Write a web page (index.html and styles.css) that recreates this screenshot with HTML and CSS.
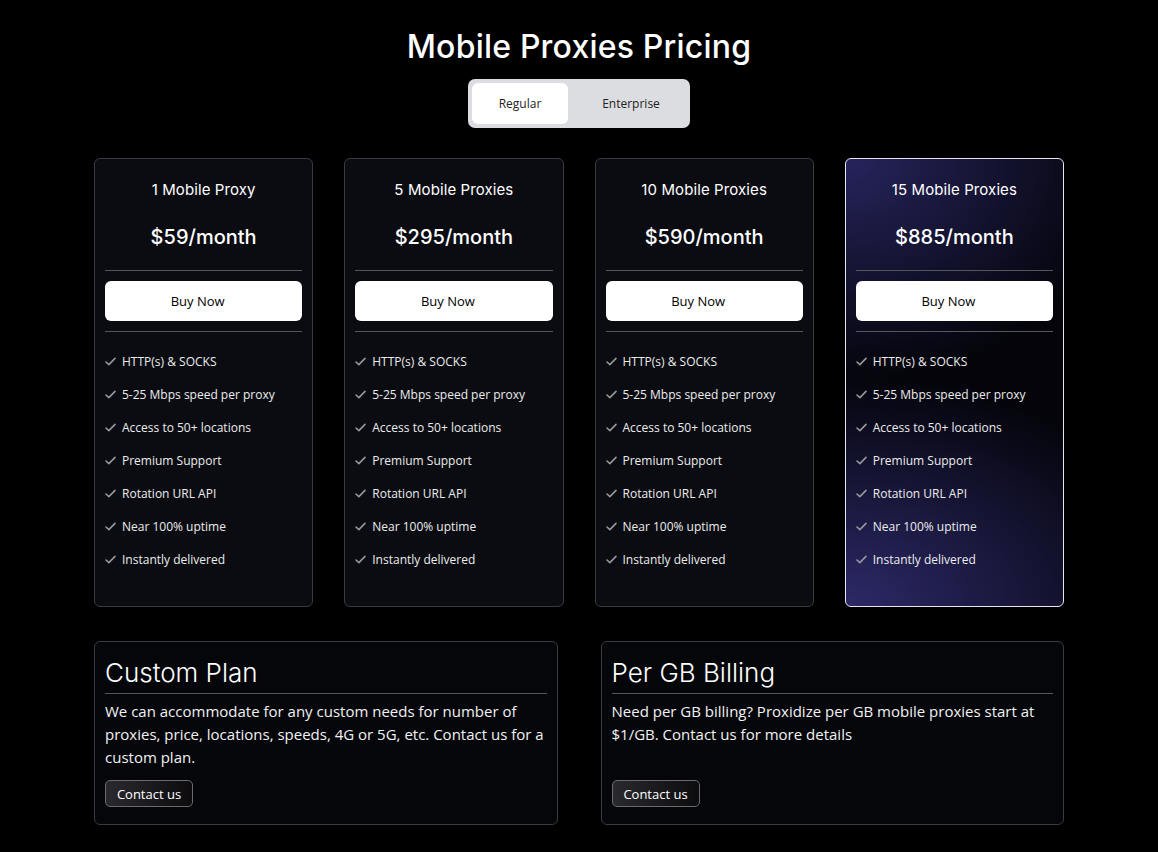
FILE: index.html
```html
<!DOCTYPE html>
<html lang="en">
<head>
<meta charset="utf-8">
<title>Mobile Proxies Pricing</title>
<link rel="stylesheet" href="styles.css">
</head>
<body>
<main class="page">
  <h1 class="title">Mobile Proxies Pricing</h1>
  <div class="toggle-wrap">
    <div class="toggle">
      <button class="tab tab-active">Regular</button>
      <button class="tab tab-wide">Enterprise</button>
    </div>
  </div>

  <section class="plans">
    <div class="plan">
      <h2 class="plan-name">1 Mobile Proxy</h2>
      <div class="plan-price">$59/month</div>
      <hr class="rule">
      <button class="buy">Buy Now</button>
      <hr class="rule">
      <ul class="features">
        <li><svg class="check" viewBox="0 0 12 10"><polyline points="1,5.5 4.2,8.5 11,1.5"/></svg>HTTP(s) &amp; SOCKS</li>
        <li><svg class="check" viewBox="0 0 12 10"><polyline points="1,5.5 4.2,8.5 11,1.5"/></svg>5-25 Mbps speed per proxy</li>
        <li><svg class="check" viewBox="0 0 12 10"><polyline points="1,5.5 4.2,8.5 11,1.5"/></svg>Access to 50+ locations</li>
        <li><svg class="check" viewBox="0 0 12 10"><polyline points="1,5.5 4.2,8.5 11,1.5"/></svg>Premium Support</li>
        <li><svg class="check" viewBox="0 0 12 10"><polyline points="1,5.5 4.2,8.5 11,1.5"/></svg>Rotation URL API</li>
        <li><svg class="check" viewBox="0 0 12 10"><polyline points="1,5.5 4.2,8.5 11,1.5"/></svg>Near 100% uptime</li>
        <li><svg class="check" viewBox="0 0 12 10"><polyline points="1,5.5 4.2,8.5 11,1.5"/></svg>Instantly delivered</li>
      </ul>
    </div>
    <div class="plan">
      <h2 class="plan-name">5 Mobile Proxies</h2>
      <div class="plan-price">$295/month</div>
      <hr class="rule">
      <button class="buy">Buy Now</button>
      <hr class="rule">
      <ul class="features">
        <li><svg class="check" viewBox="0 0 12 10"><polyline points="1,5.5 4.2,8.5 11,1.5"/></svg>HTTP(s) &amp; SOCKS</li>
        <li><svg class="check" viewBox="0 0 12 10"><polyline points="1,5.5 4.2,8.5 11,1.5"/></svg>5-25 Mbps speed per proxy</li>
        <li><svg class="check" viewBox="0 0 12 10"><polyline points="1,5.5 4.2,8.5 11,1.5"/></svg>Access to 50+ locations</li>
        <li><svg class="check" viewBox="0 0 12 10"><polyline points="1,5.5 4.2,8.5 11,1.5"/></svg>Premium Support</li>
        <li><svg class="check" viewBox="0 0 12 10"><polyline points="1,5.5 4.2,8.5 11,1.5"/></svg>Rotation URL API</li>
        <li><svg class="check" viewBox="0 0 12 10"><polyline points="1,5.5 4.2,8.5 11,1.5"/></svg>Near 100% uptime</li>
        <li><svg class="check" viewBox="0 0 12 10"><polyline points="1,5.5 4.2,8.5 11,1.5"/></svg>Instantly delivered</li>
      </ul>
    </div>
    <div class="plan">
      <h2 class="plan-name">10 Mobile Proxies</h2>
      <div class="plan-price">$590/month</div>
      <hr class="rule">
      <button class="buy">Buy Now</button>
      <hr class="rule">
      <ul class="features">
        <li><svg class="check" viewBox="0 0 12 10"><polyline points="1,5.5 4.2,8.5 11,1.5"/></svg>HTTP(s) &amp; SOCKS</li>
        <li><svg class="check" viewBox="0 0 12 10"><polyline points="1,5.5 4.2,8.5 11,1.5"/></svg>5-25 Mbps speed per proxy</li>
        <li><svg class="check" viewBox="0 0 12 10"><polyline points="1,5.5 4.2,8.5 11,1.5"/></svg>Access to 50+ locations</li>
        <li><svg class="check" viewBox="0 0 12 10"><polyline points="1,5.5 4.2,8.5 11,1.5"/></svg>Premium Support</li>
        <li><svg class="check" viewBox="0 0 12 10"><polyline points="1,5.5 4.2,8.5 11,1.5"/></svg>Rotation URL API</li>
        <li><svg class="check" viewBox="0 0 12 10"><polyline points="1,5.5 4.2,8.5 11,1.5"/></svg>Near 100% uptime</li>
        <li><svg class="check" viewBox="0 0 12 10"><polyline points="1,5.5 4.2,8.5 11,1.5"/></svg>Instantly delivered</li>
      </ul>
    </div>
    <div class="plan plan-featured">
      <h2 class="plan-name">15 Mobile Proxies</h2>
      <div class="plan-price">$885/month</div>
      <hr class="rule">
      <button class="buy">Buy Now</button>
      <hr class="rule">
      <ul class="features">
        <li><svg class="check" viewBox="0 0 12 10"><polyline points="1,5.5 4.2,8.5 11,1.5"/></svg>HTTP(s) &amp; SOCKS</li>
        <li><svg class="check" viewBox="0 0 12 10"><polyline points="1,5.5 4.2,8.5 11,1.5"/></svg>5-25 Mbps speed per proxy</li>
        <li><svg class="check" viewBox="0 0 12 10"><polyline points="1,5.5 4.2,8.5 11,1.5"/></svg>Access to 50+ locations</li>
        <li><svg class="check" viewBox="0 0 12 10"><polyline points="1,5.5 4.2,8.5 11,1.5"/></svg>Premium Support</li>
        <li><svg class="check" viewBox="0 0 12 10"><polyline points="1,5.5 4.2,8.5 11,1.5"/></svg>Rotation URL API</li>
        <li><svg class="check" viewBox="0 0 12 10"><polyline points="1,5.5 4.2,8.5 11,1.5"/></svg>Near 100% uptime</li>
        <li><svg class="check" viewBox="0 0 12 10"><polyline points="1,5.5 4.2,8.5 11,1.5"/></svg>Instantly delivered</li>
      </ul>
    </div>
  </section>

  <section class="extras">
    <div class="extra">
      <h3 class="extra-title">Custom Plan</h3>
      <hr class="rule rule-tight">
      <p class="extra-text">We can accommodate for any custom needs for number of proxies, price, locations, speeds, 4G or 5G, etc. Contact us for a custom plan.</p>
      <button class="contact">Contact us</button>
    </div>
    <div class="extra">
      <h3 class="extra-title">Per GB Billing</h3>
      <hr class="rule rule-tight">
      <p class="extra-text">Need per GB billing? Proxidize per GB mobile proxies start at $1/GB. Contact us for more details</p>
      <button class="contact">Contact us</button>
    </div>
  </section>
</main>
</body>
</html>
```

FILE: styles.css
```css
* { box-sizing: border-box; }

body {
  margin: 0;
  background: #000;
  color: #fff;
  font-family: "Open Sans", "Liberation Sans", sans-serif;
}

.page {
  width: 970px;
  margin: 0 auto;
  padding-top: 24px;
}

.title {
  margin: 0;
  font-family: Inter, "Open Sans", sans-serif;
  font-weight: 500;
  font-size: 32px;
  line-height: 46px;
  text-align: center;
  letter-spacing: 0.2px;
}

.toggle-wrap {
  display: flex;
  justify-content: center;
  margin-top: 9px;
}

.toggle {
  display: flex;
  padding: 4px;
  background: #dcdde0;
  border-radius: 7px;
}

.tab {
  width: 96px;
  height: 41px;
  border: 0;
  border-radius: 6px;
  background: transparent;
  font-family: "Open Sans", sans-serif;
  font-size: 12px;
  color: #222;
  padding: 0;
}

.tab-wide {
  width: 118px;
  padding-left: 8px;
}

.tab-active { background: #fff; }

.plans {
  display: grid;
  grid-template-columns: repeat(4, 1fr);
  column-gap: 31px;
  margin-top: 30px;
}

.plan {
  height: 449px;
  border: 1px solid #3a3a42;
  border-radius: 6px;
  background: #0b0c12;
  padding: 19px 10px 0;
}

.plan-featured {
  border-color: #e6e6ee;
  background:
    radial-gradient(ellipse 130% 50% at 0% 0%, rgba(38, 36, 92, 1), rgba(38, 36, 92, 0) 100%),
    radial-gradient(ellipse 160% 52% at 0% 100%, rgba(44, 41, 104, 1), rgba(44, 41, 104, 0) 100%),
    #04040a;
}

.plan-name {
  margin: 0;
  font-family: Inter, "Open Sans", sans-serif;
  font-weight: 400;
  font-size: 15px;
  line-height: 24px;
  text-align: center;
  letter-spacing: 0.1px;
}

.plan-price {
  margin-top: 20px;
  font-family: Inter, "Open Sans", sans-serif;
  font-weight: 500;
  font-size: 20px;
  line-height: 30px;
  text-align: center;
}

.rule {
  margin: 18px 0 0;
  border: 0;
  border-top: 1px solid #55565c;
  height: 0;
}

.buy {
  display: block;
  width: 100%;
  height: 40px;
  margin-top: 10px;
  border: 0;
  border-radius: 6px;
  background: #fff;
  font-family: "Open Sans", sans-serif;
  font-size: 13px;
  font-weight: 500;
  color: #000;
  padding: 0 12px 0 0;
}

.buy + .rule { margin-top: 10px; }

.features {
  list-style: none;
  margin: 13px 0 0;
  padding: 0;
}

.features li {
  display: flex;
  align-items: center;
  height: 33px;
  font-size: 12px;
  color: #ececec;
}

.check {
  width: 11px;
  height: 9px;
  margin-right: 6px;
  fill: none;
  stroke: #9a9a9e;
  stroke-width: 1.7;
  stroke-linecap: round;
  stroke-linejoin: round;
}

.extras {
  display: grid;
  grid-template-columns: 1fr 1fr;
  column-gap: 43px;
  margin-top: 34px;
  padding-bottom: 28px;
}

.extra {
  display: flex;
  flex-direction: column;
  align-items: flex-start;
  min-height: 184px;
  border: 1px solid #3a3a42;
  border-radius: 6px;
  background: #05060a;
  padding: 13px 10px 17px;
}

.extra-title {
  margin: 0;
  font-family: Inter, "Open Sans", sans-serif;
  font-weight: 300;
  font-size: 26px;
  line-height: 36px;
}

.rule-tight {
  align-self: stretch;
  margin-top: 2px;
}

.extra-text {
  margin: 6px 0 10px;
  font-size: 15px;
  line-height: 23px;
  color: #f2f2f2;
}

.contact {
  margin-top: auto;
  width: 88px;
  height: 27px;
  border: 1px solid #6a6a70;
  border-radius: 5px;
  background: linear-gradient(90deg, #2a2a2e 0%, #0c0c0f 100%);
  font-family: "Open Sans", sans-serif;
  font-size: 13px;
  color: #fff;
  padding: 0;
}
```
